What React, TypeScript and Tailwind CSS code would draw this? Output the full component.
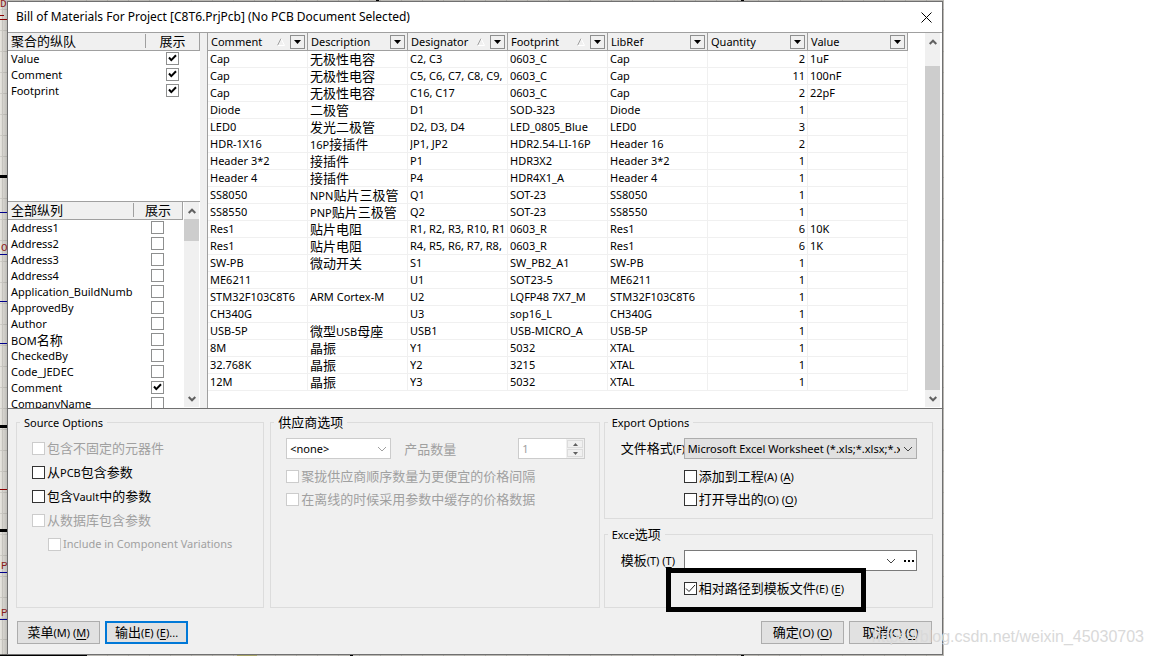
import type { ReactNode } from 'react';
import clsx from 'clsx';

type Row = [string, string, string, string, string, number, string];

const rows: Row[] = [
  ['Cap', '无极性电容', 'C2, C3', '0603_C', 'Cap', 2, '1uF'],
  ['Cap', '无极性电容', 'C5, C6, C7, C8, C9, C10', '0603_C', 'Cap', 11, '100nF'],
  ['Cap', '无极性电容', 'C16, C17', '0603_C', 'Cap', 2, '22pF'],
  ['Diode', '二极管', 'D1', 'SOD-323', 'Diode', 1, ''],
  ['LED0', '发光二极管', 'D2, D3, D4', 'LED_0805_Blue', 'LED0', 3, ''],
  ['HDR-1X16', '16P接插件', 'JP1, JP2', 'HDR2.54-LI-16P', 'Header 16', 2, ''],
  ['Header 3*2', '接插件', 'P1', 'HDR3X2', 'Header 3*2', 1, ''],
  ['Header 4', '接插件', 'P4', 'HDR4X1_A', 'Header 4', 1, ''],
  ['SS8050', 'NPN贴片三极管', 'Q1', 'SOT-23', 'SS8050', 1, ''],
  ['SS8550', 'PNP贴片三极管', 'Q2', 'SOT-23', 'SS8550', 1, ''],
  ['Res1', '贴片电阻', 'R1, R2, R3, R10, R11', '0603_R', 'Res1', 6, '10K'],
  ['Res1', '贴片电阻', 'R4, R5, R6, R7, R8, R9', '0603_R', 'Res1', 6, '1K'],
  ['SW-PB', '微动开关', 'S1', 'SW_PB2_A1', 'SW-PB', 1, ''],
  ['ME6211', '', 'U1', 'SOT23-5', 'ME6211', 1, ''],
  ['STM32F103C8T6', 'ARM Cortex-M', 'U2', 'LQFP48 7X7_M', 'STM32F103C8T6', 1, ''],
  ['CH340G', '', 'U3', 'sop16_L', 'CH340G', 1, ''],
  ['USB-5P', '微型USB母座', 'USB1', 'USB-MICRO_A', 'USB-5P', 1, ''],
  ['8M', '晶振', 'Y1', '5032', 'XTAL', 1, ''],
  ['32.768K', '晶振', 'Y2', '3215', 'XTAL', 1, ''],
  ['12M', '晶振', 'Y3', '5032', 'XTAL', 1, ''],
];

const columns = [
  { name: 'Comment', sorted: true },
  { name: 'Description', sorted: false },
  { name: 'Designator', sorted: true },
  { name: 'Footprint', sorted: true },
  { name: 'LibRef', sorted: false },
  { name: 'Quantity', sorted: false },
  { name: 'Value', sorted: false },
];

const groupedColumns = ['Value', 'Comment', 'Footprint'];

const allColumns = [
  'Address1',
  'Address2',
  'Address3',
  'Address4',
  'Application_BuildNumb',
  'ApprovedBy',
  'Author',
  'BOM名称',
  'CheckedBy',
  'Code_JEDEC',
  'Comment',
  'CompanyName',
];

// Chinese runs are set larger than the Latin text around them
function Mixed({ text }: { text: string }) {
  return (
    <>
      {text.split(/([\u4e00-\u9fff]+)/).map((part, i) =>
        i % 2 ? (
          <span key={i} className="text-[13px]">
            {part}
          </span>
        ) : (
          part
        )
      )}
    </>
  );
}

function Mnemonic({ letter }: { letter: string }) {
  return (
    <>
      ({letter}) (<u className="underline-offset-2">{letter}</u>)
    </>
  );
}

function Chevron({ className }: { className?: string }) {
  return (
    <svg className={clsx('h-[6px] w-[10px] shrink-0', className)} viewBox="0 0 10 6" fill="none" stroke="currentColor">
      <path d="M1 1l4 4 4-4" />
    </svg>
  );
}

function ScrollArrow({ up }: { up?: boolean }) {
  return (
    <svg className="h-[6px] w-2 shrink-0" viewBox="0 0 8 6" fill="none" stroke="#606060" strokeWidth="2">
      <path d={up ? 'M.7 5L4 1.700 7.300 5' : 'M.7 1L4 4.300 7.300 1'} />
    </svg>
  );
}

function Scrollbar({ name, thumb }: { name: string; thumb: string }) {
  return (
    <div className="mb-px flex w-[15px] shrink-0 flex-col bg-[#f0f0f0]">
      <button type="button" aria-label={`${name} up`} className="flex h-[17px] w-full shrink-0 items-center justify-center">
        <ScrollArrow up />
      </button>
      <div className="min-h-0 flex-1">
        <div className={clsx('bg-[#cdcdcd]', thumb)} />
      </div>
      <button type="button" aria-label={`${name} down`} className="flex h-[17px] w-full shrink-0 items-center justify-center">
        <ScrollArrow />
      </button>
    </div>
  );
}

function ListHeader({ title, width }: { title: string; width: string }) {
  return (
    <div className="flex h-[18px] shrink-0 items-start border-r border-b border-[#a0a0a0] bg-[#f0f0f0] text-[13px] leading-4">
      <span className="flex-1 pl-[3px]">{title}</span>
      <span className={clsx('mt-px h-[14px] border-l border-[#a0a0a0] text-center leading-[14px]', width)}>展示</span>
    </div>
  );
}

function ListRow({ id, label, checked, pad }: { id: string; label: string; checked: boolean; pad: string }) {
  return (
    <div className={clsx('flex h-4 shrink-0 items-start pl-[3px]', pad)}>
      <label htmlFor={id} className="flex-1 leading-4 whitespace-nowrap">
        <Mixed text={label} />
      </label>
      <span className="relative mt-px h-[13px] w-[13px]">
        <input
          id={id}
          type="checkbox"
          defaultChecked={checked}
          className="peer block h-[13px] w-[13px] appearance-none border border-[#8e8f8f] bg-white"
        />
        <svg
          className="pointer-events-none absolute inset-0 hidden h-[13px] w-[13px] peer-checked:block"
          viewBox="0 0 13 13"
          fill="none"
          stroke="black"
          strokeWidth="2"
        >
          <path d="M3 5.500l2.300 2.600L10 3.200" />
        </svg>
      </span>
    </div>
  );
}

interface CheckProps {
  id: string;
  children: ReactNode;
  disabled?: boolean;
  checked?: boolean;
  className?: string;
}

function Check({ id, children, disabled, checked, className }: CheckProps) {
  return (
    <div className={clsx('flex h-4 items-center', disabled && 'text-[#a0a0a0]', className)}>
      <span className="relative mr-[2px] h-[13px] w-[13px] shrink-0">
        <input
          id={id}
          type="checkbox"
          disabled={disabled}
          defaultChecked={checked}
          className="peer block h-[13px] w-[13px] appearance-none border border-[#333333] bg-white disabled:border-[#cccccc]"
        />
        <svg
          className="pointer-events-none absolute inset-0 hidden h-[13px] w-[13px] peer-checked:block"
          viewBox="0 0 13 13"
          fill="none"
          stroke="#222"
        >
          <path d="M2 6.500l3 3 6-6.500" />
        </svg>
      </span>
      <label htmlFor={id} className="leading-4 whitespace-nowrap">
        {children}
      </label>
    </div>
  );
}

function Group({ title, className, children }: { title: string; className?: string; children: ReactNode }) {
  return (
    <fieldset className={clsx('min-w-0 border border-[#dcdcdc]', className)}>
      <legend className="ml-[3px] h-[15px] px-1 leading-[15px]">
        <Mixed text={title} />
      </legend>
      {children}
    </fieldset>
  );
}

function DialogButton({ text, letter, suffix, primary }: { text: string; letter: string; suffix?: string; primary?: boolean }) {
  return (
    <button
      type="button"
      className={clsx(
        'h-[23px] w-[83px] bg-[#e1e1e1] leading-4 whitespace-nowrap',
        primary ? 'border-2 border-[#0078d7]' : 'border border-[#adadad]'
      )}
    >
      <Mixed text={text} />
      <Mnemonic letter={letter} />
      {suffix}
    </button>
  );
}

// The slice of the schematic sheet that shows around the dialog
function Schematic() {
  return (
    <svg className="absolute inset-0 h-full w-full">
      <defs>
        <pattern id="sheet" width="21" height="21" patternUnits="userSpaceOnUse">
          <path d="M0 9.500H21M2.500 0V21" stroke="#d2d0ca" />
        </pattern>
        <linearGradient id="shade" x1="0" x2="8" y1="0" y2="0" gradientUnits="userSpaceOnUse">
          <stop offset="0" stopColor="#000" stopOpacity="0" />
          <stop offset="1" stopColor="#000" stopOpacity="0.2" />
        </linearGradient>
      </defs>
      <rect width="100%" height="100%" fill="#e8e6e0" />
      <rect width="100%" height="100%" fill="url(#sheet)" />
      <rect width="100%" height="100%" fill="url(#shade)" />
      <path d="M0 176.500H8M0 426.500H8M0 530.500H8" stroke="#000" strokeWidth="3" />
      <path d="M0 212.500H8M0 254.500H8M0 301.500H8M0 343.500H8M0 572.500H8M0 619.500H8" stroke="#00008b" />
      <path d="M0 19.500H8M0 15.500H4M0 489.500H8" stroke="#8b0000" />
      <path d="M0 655.500H87M350 655.500H353M741 655.500H744M376 .5H379M741 .5H744" stroke="#000" strokeWidth="2" />
      <path d="M237 655.500H257" stroke="#a8a468" />
      <g fill="#8b2020" fontFamily="Liberation Mono" fontSize="11">
        <text x="0" y="7">D</text>
        <text x="1" y="251">O</text>
        <text x="1" y="569">P</text>
        <text x="1" y="616">P</text>
      </g>
    </svg>
  );
}

export default function App() {
  return (
    <div className="relative h-screen min-h-[656px] bg-white pr-52 font-['Noto_Sans','Noto_Sans_CJK_SC',sans-serif] text-[11px] text-black">
      <div className="relative h-full py-px pr-px pl-[7px]">
        <Schematic />
        <main className="relative flex h-full flex-col border border-[#707070] bg-[#f0f0f0]">
          <header className="flex h-[30px] shrink-0 items-center justify-between bg-white pr-2 pl-2">
            <h1 className="text-[12px] leading-4">Bill of Materials For Project [C8T6.PrjPcb] (No PCB Document Selected)</h1>
            <button type="button" aria-label="Close" className="flex h-4 w-4 items-center justify-center">
              <svg className="h-[11px] w-[11px]" viewBox="0 0 11 11" stroke="black">
                <path d="M.5 .5l10 10M10.500 .5l-10 10" />
              </svg>
            </button>
          </header>

          <div className="flex h-[376px] shrink-0 border-t border-[#a0a0a0]">
            <aside className="flex w-48 shrink-0 flex-col bg-white">
              <section className="flex h-[168px] shrink-0 flex-col">
                <ListHeader title="聚合的纵队" width="w-[54px]" />
                {groupedColumns.map((name) => (
                  <ListRow key={name} id={`group-${name}`} label={name} checked pad="pr-[21px]" />
                ))}
              </section>
              <section className="flex min-h-0 flex-1 border-t border-[#a0a0a0]">
                <div className="flex min-w-0 flex-1 flex-col overflow-hidden">
                  <ListHeader title="全部纵列" width="w-[49px]" />
                  {allColumns.map((name) => (
                    <ListRow key={name} id={`all-${name}`} label={name} checked={name === 'Comment'} pad="pr-[19px]" />
                  ))}
                </div>
                <div className="flex pr-px pl-px">
                  <Scrollbar name="Scroll columns" thumb="h-[22px]" />
                </div>
              </section>
            </aside>

            <section className="ml-[7px] flex min-w-0 flex-1 border-l border-[#a0a0a0] bg-white pr-[2px]">
              <div className="min-w-0 flex-1 overflow-hidden">
                <table className="w-[700px] table-fixed border-separate border-spacing-0">
                  <thead>
                    <tr className="h-[18px]">
                      {columns.map((col) => (
                        <th key={col.name} className="border-b border-[#a0a0a0] bg-[#f0f0f0] p-0 font-normal">
                          <div className="flex h-[17px] items-center border-r border-[#a0a0a0] pr-[2px] pl-[3px]">
                            <span className="flex-1 text-left leading-4">{col.name}</span>
                            {col.sorted && (
                              <svg className="mr-[5px] h-2 w-2" viewBox="0 0 8 8" fill="none">
                                <path d="M.5 7.500L4 .5" stroke="#a0a0a0" />
                                <path d="M4 .5l3.500 7H.5" stroke="#fff" />
                              </svg>
                            )}
                            <button
                              type="button"
                              aria-label={`Filter ${col.name}`}
                              className="flex h-[14px] w-[15px] items-center justify-center border border-[#8e8f8f]"
                            >
                              <svg className="h-1 w-[7px]" viewBox="0 0 7 4">
                                <path d="M0 0h7L3.500 4z" />
                              </svg>
                            </button>
                          </div>
                        </th>
                      ))}
                    </tr>
                  </thead>
                  <tbody>
                    {rows.map((row, r) => (
                      <tr key={r} className="h-[17px]">
                        {row.map((cell, c) => (
                          <td key={c} className="border-r border-b border-[#f0f0f0] p-0">
                            <div
                              className={clsx(
                                'mx-[2px] h-4 overflow-hidden leading-4 whitespace-nowrap',
                                c === 5 && 'text-right'
                              )}
                            >
                              <Mixed text={String(cell)} />
                            </div>
                          </td>
                        ))}
                      </tr>
                    ))}
                  </tbody>
                </table>
              </div>
              <Scrollbar name="Scroll table" thumb="mt-4 h-[calc(100%-16px)]" />
            </section>
          </div>

          <div className="flex min-h-0 flex-1 flex-col border-t border-[#707070] pr-[9px] pl-2">
            <div className="mt-[6px] flex h-[193px]">
              <Group title="Source Options" className="flex-[249]">
                <div className="flex flex-col gap-2 pt-[10px] pl-[15px]">
                  <Check id="fitted" disabled>
                    <Mixed text="包含不固定的元器件" />
                  </Check>
                  <Check id="pcb">
                    <Mixed text="从PCB包含参数" />
                  </Check>
                  <Check id="vault">
                    <Mixed text="包含Vault中的参数" />
                  </Check>
                  <Check id="db" disabled>
                    <Mixed text="从数据库包含参数" />
                  </Check>
                  <Check id="variations" disabled className="ml-4">
                    Include in Component Variations
                  </Check>
                </div>
              </Group>

              <Group title="供应商选项" className="ml-[6px] flex-[331]">
                <div className="pt-2 pl-[15px]">
                  <div className="flex h-[21px] items-center">
                    <div className="relative">
                      <select
                        aria-label="供应商选项"
                        className="block h-[21px] w-[105px] appearance-none border border-[#cccccc] bg-white pl-[3px] leading-4"
                      >
                        <option>&lt;none&gt;</option>
                      </select>
                      <Chevron className="pointer-events-none absolute top-2 right-1 text-[#a0a0a0]" />
                    </div>
                    <label htmlFor="qty" className="ml-[13px] w-[114px] text-[13px] leading-4 text-[#a0a0a0]">
                      产品数量
                    </label>
                    <div className="flex h-[21px] w-[67px] border border-[#cccccc] bg-white">
                      <input
                        id="qty"
                        type="text"
                        defaultValue="1"
                        disabled
                        className="w-[47px] pl-[3px] leading-4 text-[#a0a0a0]"
                      />
                      <div className="flex flex-1 flex-col gap-px bg-[#f0f0f0] p-px">
                        {['up', 'down'].map((dir) => (
                          <button
                            key={dir}
                            type="button"
                            disabled
                            aria-label={`Quantity ${dir}`}
                            className="flex w-4 flex-1 items-center justify-center border border-[#dcdcdc]"
                          >
                            <svg className="h-[3px] w-[5px]" viewBox="0 0 5 3" fill="#606060">
                              <path d={dir === 'up' ? 'M0 3h5L2.500 0z' : 'M0 0h5L2.500 3z'} />
                            </svg>
                          </button>
                        ))}
                      </div>
                    </div>
                  </div>
                  <Check id="roundup" disabled className="mt-[9px]">
                    <Mixed text="聚拢供应商顺序数量为更便宜的价格间隔" />
                  </Check>
                  <Check id="cached" disabled className="mt-[7px]">
                    <Mixed text="在离线的时候采用参数中缓存的价格数据" />
                  </Check>
                </div>
              </Group>

              <div className="ml-1 flex min-w-0 flex-[333] flex-col gap-2">
                <Group title="Export Options" className="h-[104px]">
                  <div className="pt-2 pr-[15px] pl-4">
                    <div className="flex h-[21px] items-center">
                      <label htmlFor="format" className="w-[63px] shrink-0 overflow-hidden leading-4 whitespace-nowrap">
                        <Mixed text="文件格式(F)" />
                      </label>
                      <div className="relative min-w-0 flex-1">
                        <select
                          id="format"
                          className="block h-[21px] w-full appearance-none border border-[#adadad] bg-[#e1e1e1] pr-4 pl-[3px] leading-4"
                        >
                          <option>Microsoft Excel Worksheet (*.xls;*.xlsx;*.xlt)</option>
                        </select>
                        <Chevron className="pointer-events-none absolute top-2 right-1 text-[#444444]" />
                      </div>
                    </div>
                    <Check id="add" className="mt-[9px] ml-[63px]">
                      <Mixed text="添加到工程" />
                      <Mnemonic letter="A" />
                    </Check>
                    <Check id="open" className="mt-[7px] ml-[63px]">
                      <Mixed text="打开导出的" />
                      <Mnemonic letter="O" />
                    </Check>
                  </div>
                </Group>

                <Group title="Exce选项" className="min-h-0 flex-1">
                  <div className="pt-2 pr-[15px] pl-4">
                    <div className="flex h-[21px] items-center">
                      <label htmlFor="template" className="w-[63px] shrink-0 leading-4 whitespace-nowrap">
                        <Mixed text="模板" />
                        <Mnemonic letter="T" />
                      </label>
                      <div className="flex h-[21px] min-w-0 flex-1 items-center border border-[#7a7a7a] bg-white">
                        <input id="template" type="text" className="h-full min-w-0 flex-1 px-1 outline-none" />
                        <Chevron className="mr-2 text-[#444444]" />
                        <button type="button" aria-label="Browse" className="mr-px flex h-4 w-[11px] items-center gap-[2px]">
                          <i className="h-[2px] w-[2px] bg-black" />
                          <i className="h-[2px] w-[2px] bg-black" />
                          <i className="h-[2px] w-[2px] bg-black" />
                        </button>
                      </div>
                    </div>
                    <div className="relative mt-[9px] ml-[63px]">
                      <Check id="relative" checked>
                        <Mixed text="相对路径到模板文件" />
                        <Mnemonic letter="E" />
                      </Check>
                      <div className="pointer-events-none absolute -top-3 -left-[18px] h-11 w-[200px] border-[5px] border-black" />
                    </div>
                  </div>
                </Group>
              </div>
            </div>

            <footer className="mt-[13px] flex gap-[5px] px-px">
              <DialogButton text="菜单" letter="M" />
              <DialogButton text="输出" letter="E" suffix="..." primary />
              <span className="flex-1" />
              <DialogButton text="确定" letter="O" />
              <DialogButton text="取消" letter="C" />
            </footer>
          </div>
        </main>
      </div>
      <p className="pointer-events-none absolute right-2 bottom-[9px] font-['Liberation_Sans',sans-serif] text-[16px] leading-5 text-[#d9d9d9]">
        https://blog.csdn.net/weixin_45030703
      </p>
    </div>
  );
}
